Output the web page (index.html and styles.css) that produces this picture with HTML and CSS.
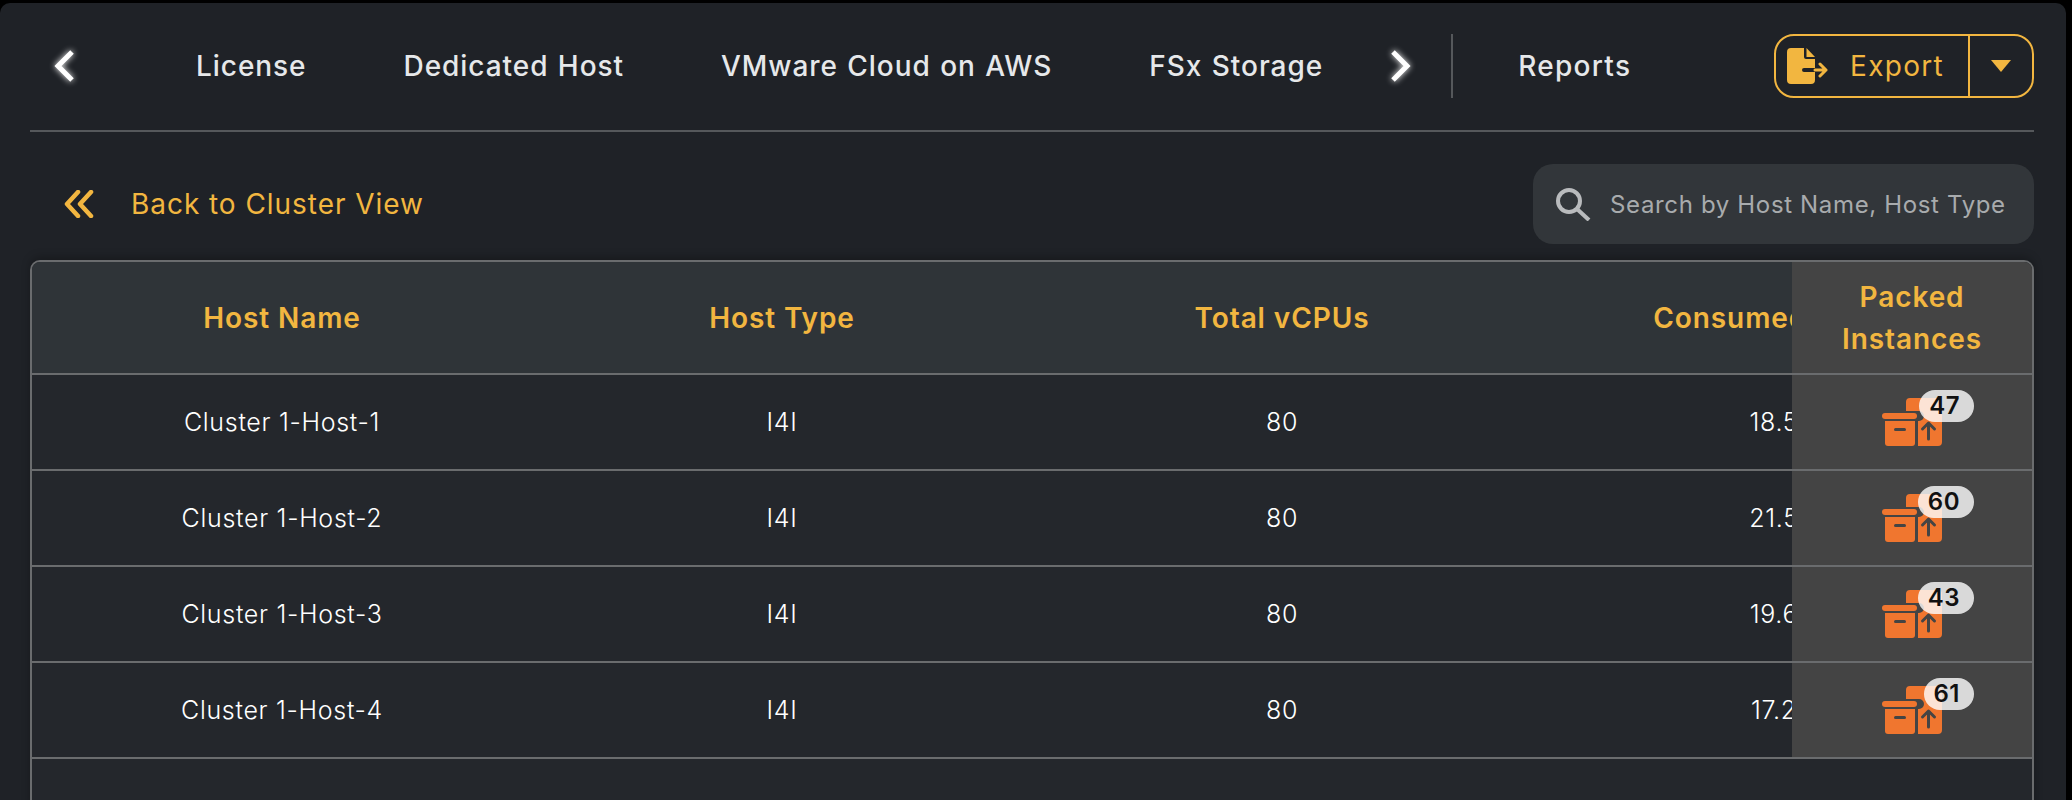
FILE: index.html
```html
<!DOCTYPE html>
<html lang="en">
<head>
<meta charset="utf-8">
<title>Hosts</title>
<link rel="stylesheet" href="styles.css">
</head>
<body>
<main class="panel">
  <header class="topbar">
    <svg class="chev chev-left" viewBox="0 0 20 32"><path d="M17 2 3 16l14 14"/></svg>
    <nav class="tabs">
      <a class="tab">License</a>
      <a class="tab">Dedicated Host</a>
      <a class="tab">VMware Cloud on AWS</a>
      <a class="tab">FSx Storage</a>
    </nav>
    <svg class="chev chev-right" viewBox="0 0 20 32"><path d="M3 2l14 14L3 30"/></svg>
    <span class="vsep"></span>
    <a class="tab tab-reports">Reports</a>
    <div class="export">
      <button class="export-main">
        <svg class="export-icon" viewBox="0 0 41 36"><path class="fill" d="M4 0h13v9a2 2 0 0 0 2 2h9v9H17a2 2 0 0 0 0 4h11v8a4 4 0 0 1-4 4H4a4 4 0 0 1-4-4V4a4 4 0 0 1 4-4z"/><path class="fill" d="M19.500 0l8.500 9h-8.500z"/><path class="line" d="M28 22h11M33 16l6 6-6 6"/></svg>
        <span>Export</span>
      </button>
      <button class="export-caret"><svg viewBox="0 0 20 12"><path d="M0 0h20L10 12z"/></svg></button>
    </div>
  </header>

  <section class="tools">
    <a class="back">
      <svg viewBox="0 0 30 28"><path d="M14 2 3 14l11 12M27 2 16 14l11 12"/></svg>
      <span>Back to Cluster View</span>
    </a>
    <div class="search">
      <svg viewBox="0 0 36 34"><circle cx="14" cy="14" r="11"/><path d="m22 22 12 11"/></svg>
      <span>Search by Host Name, Host Type</span>
    </div>
  </section>

  <div class="table-wrap">
    <table class="hosts">
      <thead>
        <tr><th>Host Name</th><th>Host Type</th><th>Total vCPUs</th><th>Consumed vCPUs</th><th class="pin">Packed<br>Instances</th></tr>
      </thead>
      <tbody>
        <tr><td>Cluster 1-Host-1</td><td>I4I</td><td>80</td><td>18.50</td><td class="pin"><span class="pack"><svg class="box" viewBox="0 0 60 48"><use href="#box"/></svg><b class="count">47</b></span></td></tr>
        <tr><td>Cluster 1-Host-2</td><td>I4I</td><td>80</td><td>21.50</td><td class="pin"><span class="pack"><svg class="box" viewBox="0 0 60 48"><use href="#box"/></svg><b class="count">60</b></span></td></tr>
        <tr><td>Cluster 1-Host-3</td><td>I4I</td><td>80</td><td>19.60</td><td class="pin"><span class="pack"><svg class="box" viewBox="0 0 60 48"><use href="#box"/></svg><b class="count">43</b></span></td></tr>
        <tr><td>Cluster 1-Host-4</td><td>I4I</td><td>80</td><td>17.20</td><td class="pin"><span class="pack"><svg class="box" viewBox="0 0 60 48"><use href="#box"/></svg><b class="count">61</b></span></td></tr>
      </tbody>
    </table>
  </div>
</main>
<svg class="defs" width="0" height="0">
  <symbol id="box" viewBox="0 0 60 48">
    <path fill="#f0762f" d="M24 13V4a4 4 0 0 1 4-4h28a4 4 0 0 1 4 4v40a4 4 0 0 1-4 4H36V23h1a5 5 0 0 0 0-10z"/>
    <rect fill="#f0762f" x="0" y="15" width="35" height="6" rx="3"/>
    <path fill="#f0762f" d="M3 23h30v22a3 3 0 0 1-3 3H6a3 3 0 0 1-3-3z"/>
    <rect fill="#444" x="12" y="30" width="12" height="3" rx="1.500"/>
    <path fill="none" stroke="#444" stroke-width="3" stroke-linecap="round" stroke-linejoin="round" d="M46.500 41V25M40.500 31l6-6 6 6"/>
  </symbol>
</svg>
</body>
</html>
```

FILE: styles.css
```css
* { box-sizing: border-box; }
html, body { margin: 0; height: 100%; background: #000; overflow: hidden; }
body { font-family: Inter, "Liberation Sans", sans-serif; }

.panel {
  margin: 3px 6px 0 0;
  height: 797px;
  padding: 0 32px 0 30px;
  background: #1f2227;
  border-radius: 10px 10px 0 0;
  overflow: hidden;
}

.topbar {
  display: flex;
  align-items: center;
  height: 129px;
  padding: 31px 0 32px 25px;
  border-bottom: 2px solid #55585b;
}
.chev { width: 20px; height: 32px; flex: none; overflow: visible; filter: drop-shadow(0 0 3px #fff); }
.chev path { fill: none; stroke: #fff; stroke-width: 5; }
.tabs { display: flex; gap: 97px; margin-left: 121px; }
.tab { font-size: 28px; font-weight: 500; letter-spacing: .95px; word-spacing: 1px; color: #e6e8ea; white-space: nowrap; }
.chev-right { margin-left: 67px; }
.vsep { width: 2px; height: 64px; background: #55585b; margin-left: 41px; }
.tab-reports { margin-left: 65px; letter-spacing: 1.3px; }

.export {
  display: flex;
  margin-left: auto;
  width: 260px;
  height: 64px;
  border: 2px solid #f2b640;
  border-radius: 20px;
}
.export button { background: none; border: 0; padding: 0; color: inherit; font: inherit; display: flex; align-items: center; }
.export-main {
  width: 194px;
  padding-left: 11px !important;
  border-right: 2px solid #f2b640 !important;
  gap: 22px;
  color: #f2b640 !important;
  font-size: 28px !important;
  letter-spacing: 1.3px;
}
.export-icon { width: 41px; height: 36px; }
.export-icon .fill { fill: #f2b640; }
.export-icon .line { fill: none; stroke: #f2b640; stroke-width: 3; stroke-linecap: round; stroke-linejoin: round; }
.export-caret { flex: 1; justify-content: center; }
.export-caret svg { width: 20px; height: 12px; fill: #f2b640; }

.tools {
  display: flex;
  justify-content: space-between;
  align-items: center;
  padding: 32px 0 16px;
}
.back { display: flex; align-items: center; gap: 37px; margin-left: 34px; color: #f2b640; font-size: 28px; letter-spacing: .95px; }
.back svg { width: 30px; height: 28px; fill: none; stroke: #f2b640; stroke-width: 4.500; stroke-linecap: round; stroke-linejoin: round; }
.search {
  display: flex;
  align-items: center;
  gap: 19px;
  width: 501px;
  height: 80px;
  padding-left: 22px;
  background: #32363a;
  border-radius: 20px;
  color: #a8abad;
  font-size: 24px;
  letter-spacing: .65px;
  white-space: nowrap;
}
.search svg { width: 36px; height: 34px; fill: none; stroke: #b9bbbd; stroke-width: 4; }

.table-wrap {
  width: 2004px;
  height: 600px;
  background: #24272c;
  border: 2px solid #6a6c6e;
  border-radius: 10px 10px 0 0;
  overflow: hidden;
  box-shadow: 0 -3px 8px rgba(0,0,0,.25);
}
.hosts { border-collapse: separate; border-spacing: 0; table-layout: fixed; width: 2240px; }
.hosts th, .hosts td { width: 500px; padding: 0; text-align: center; border-bottom: 2px solid #6a6c6e; white-space: nowrap; }
.hosts th {
  height: 113px;
  background: #2f3438;
  color: #f2b640;
  font-size: 28px;
  font-weight: 600;
  letter-spacing: .9px;
  line-height: 42px;
}
.hosts td { height: 96px; color: #fff; font-size: 25px; font-weight: 350; letter-spacing: .7px; }
.hosts th.pin, .hosts td.pin { width: 240px; position: sticky; right: 0; background: #444; }

.pack { position: relative; display: block; width: 60px; height: 48px; margin: 0 auto; }
.box { display: block; width: 60px; height: 48px; }
.count {
  position: absolute;
  top: -8px;
  right: -32px;
  height: 32px;
  padding: 0 14px 0 10px;
  border-radius: 16px;
  background: rgba(255,255,255,.8);
  color: #111;
  font-size: 24px;
  font-weight: 600;
  line-height: 32px;
  letter-spacing: .5px;
}
.defs { position: absolute; }
```
